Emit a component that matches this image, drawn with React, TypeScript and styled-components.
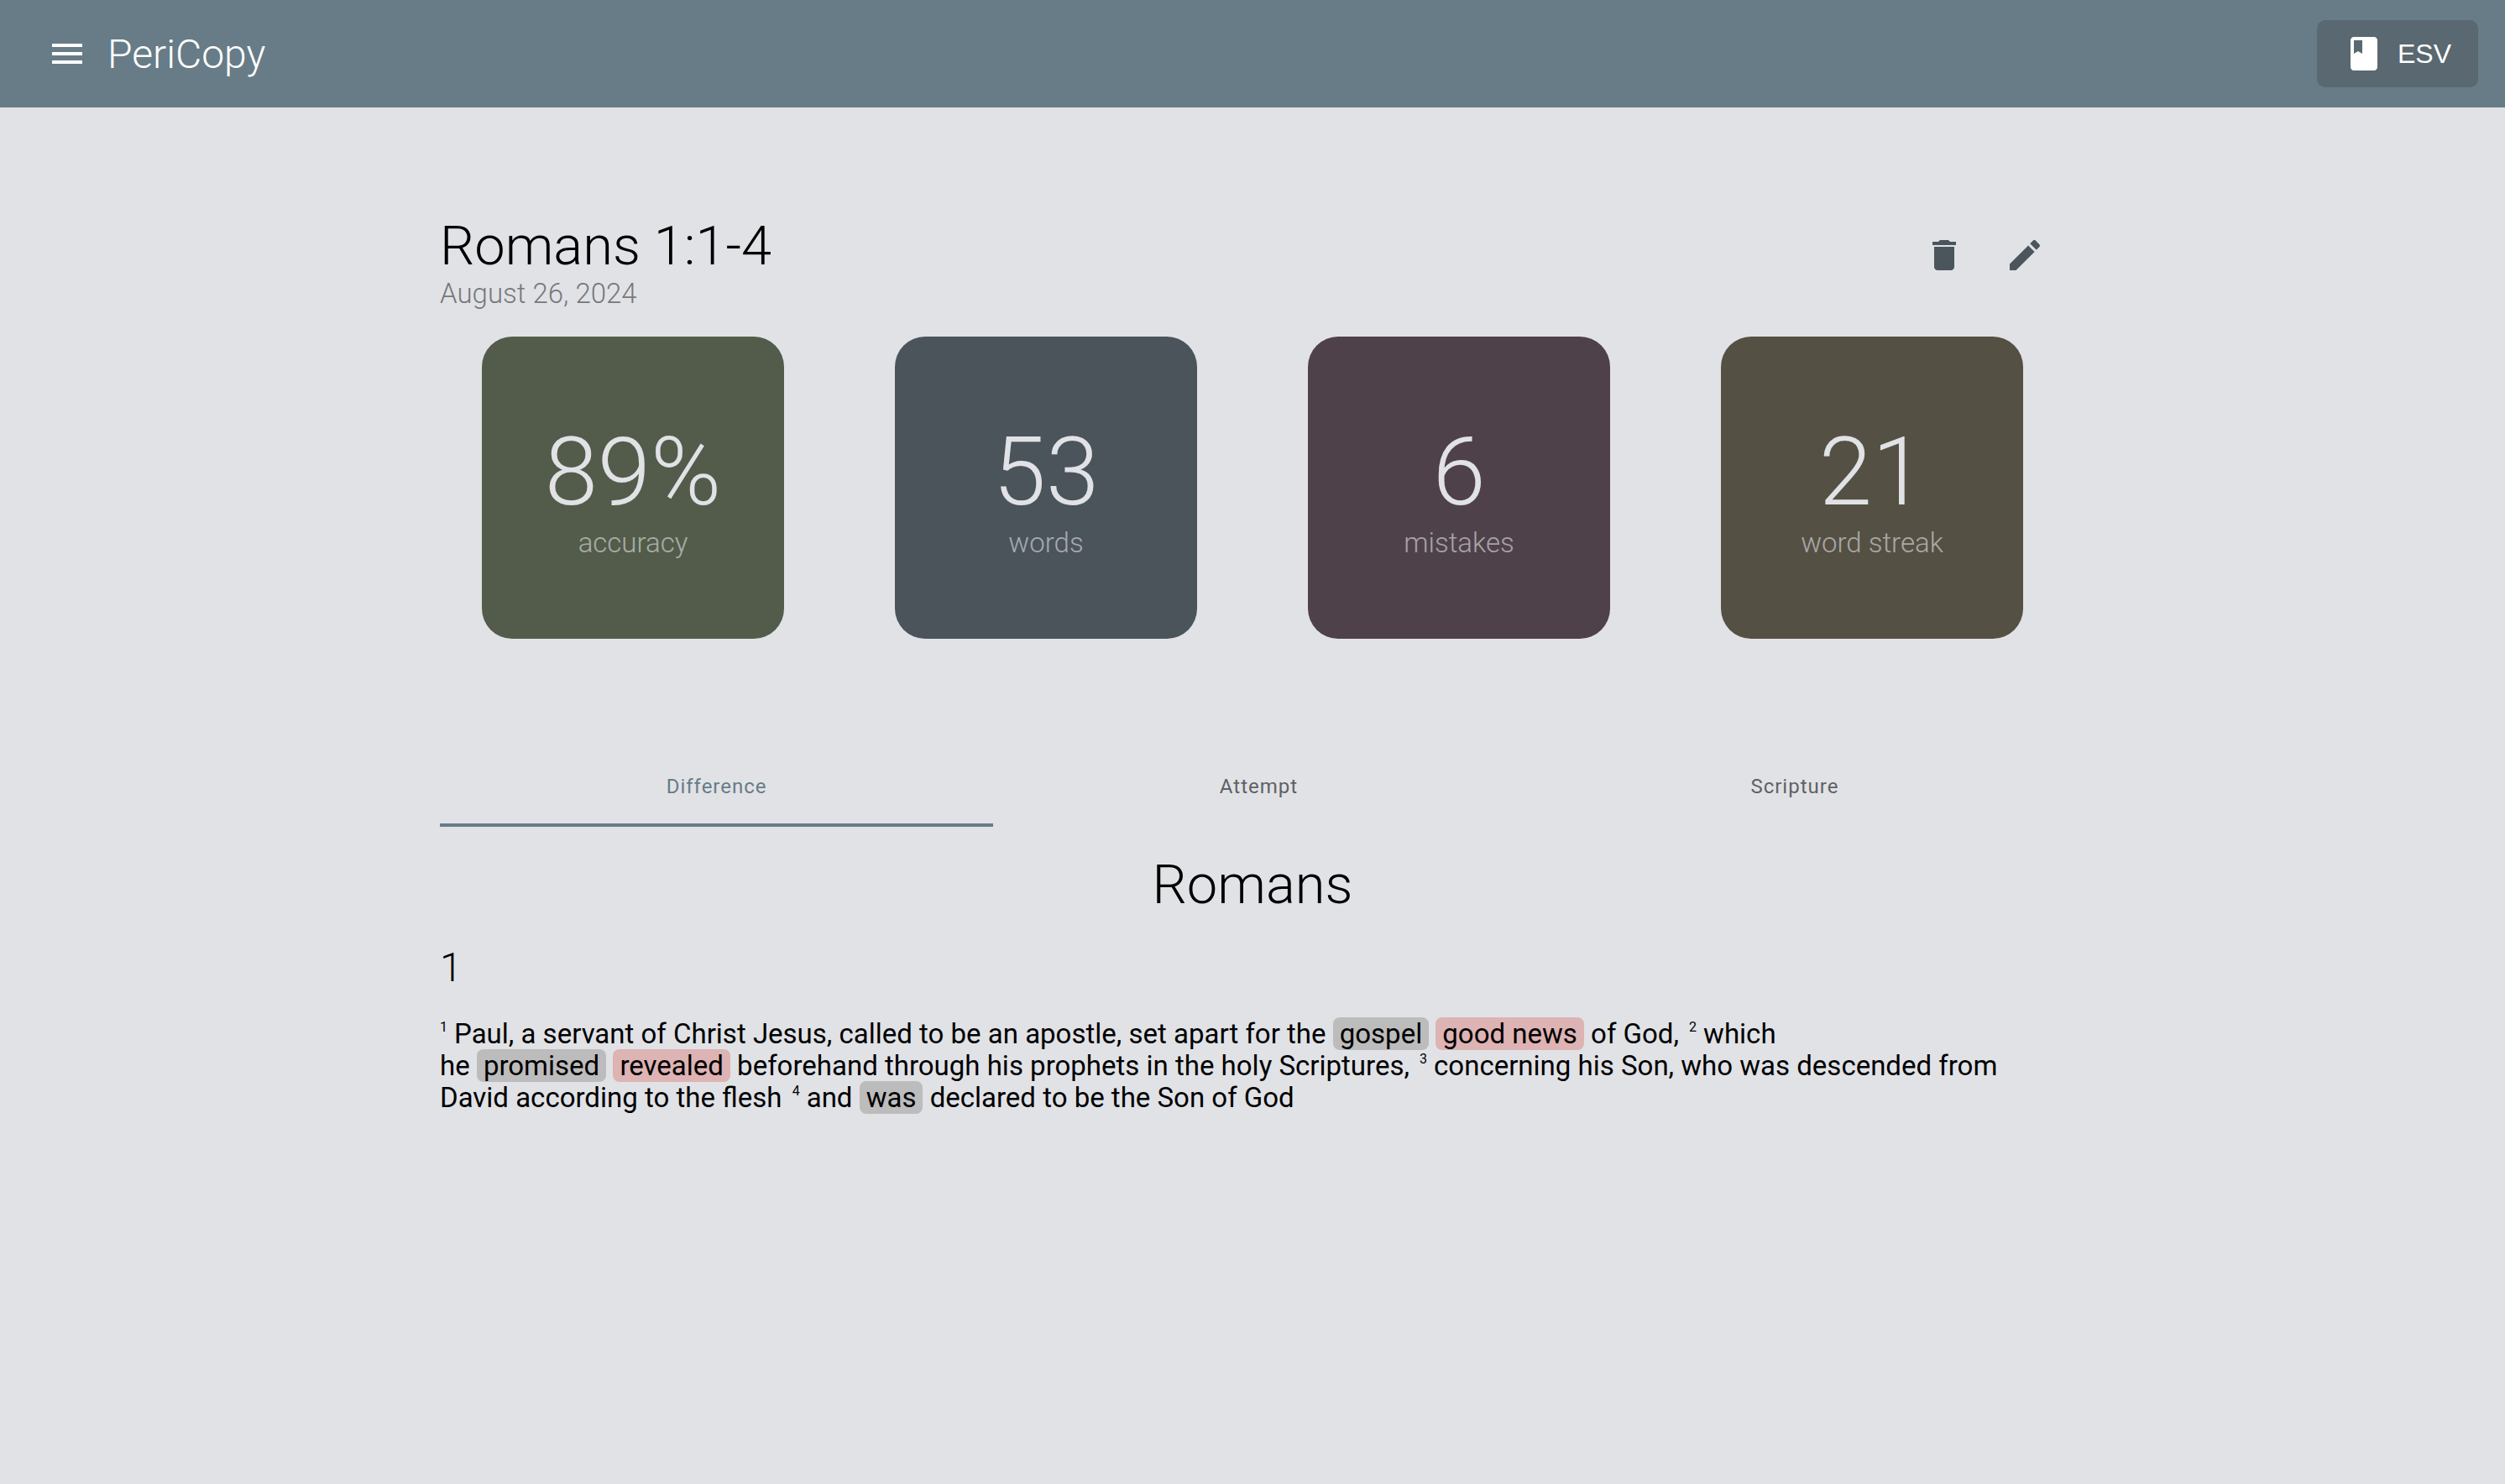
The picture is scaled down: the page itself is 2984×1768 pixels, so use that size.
import React, { useState } from "react";
import styled, { createGlobalStyle } from "styled-components";
import { MdBook, MdCreate, MdDelete, MdMenu } from "react-icons/md";

const colors = {
  page: "#e1e2e6",
  bar: "#677c87",
  chip: "#596871",
  icon: "#4b565c",
  muted: "#77787b",
  tab: "#606164",
  removed: "#bcbcbc",
  added: "#ddb3b3",
};

const GlobalStyle = createGlobalStyle`
  *, *::before, *::after { box-sizing: border-box; }
  body {
    margin: 0;
    min-height: 100vh;
    background: ${colors.page};
    color: #000;
    font-family: Roboto, sans-serif;
    font-size: 33px;
    line-height: 38px;
  }
  button {
    border: 0;
    background: none;
    color: inherit;
    font: inherit;
    cursor: pointer;
  }
  h1, h2, h3, p, dl, dd { margin: 0; }
`;

const AppBar = styled.header`
  display: flex;
  align-items: center;
  justify-content: space-between;
  height: 128px;
  padding: 0 32px;
  background: ${colors.bar};
  color: #fff;
`;

const Brand = styled.div`
  display: flex;
  align-items: center;
`;

const IconButton = styled.button`
  display: flex;
  padding: 24px;
  font-size: 48px;
`;

const BrandName = styled.span`
  font-size: 48px;
  font-weight: 300;
  line-height: 57px;
`;

const TranslationButton = styled.button`
  display: flex;
  align-items: center;
  gap: 16px;
  height: 80px;
  padding: 0 32px;
  border-radius: 10px;
  background: ${colors.chip};
  font-family: "Liberation Sans", Arial, sans-serif;
  font-size: 32px;
  svg { font-size: 48px; }
`;

const Content = styled.main`
  max-width: 2000px;
  margin: 0 auto;
  padding: 128px 32px;
`;

const TitleRow = styled.div`
  display: flex;
  align-items: flex-start;
  justify-content: space-between;
  margin-bottom: 32px;
`;

const Title = styled.h1`
  font-size: 65px;
  font-weight: 300;
  line-height: 75px;
`;

const DateLine = styled.p`
  color: ${colors.muted};
  font-weight: 300;
`;

const Actions = styled.div`
  display: flex;
  color: ${colors.icon};
`;

const Stats = styled.dl`
  display: grid;
  grid-template-columns: repeat(4, 1fr);
  justify-items: center;
  margin: 0 -16px 128px;
`;

const StatCard = styled.div<{ $tone: string }>`
  display: flex;
  flex-direction: column-reverse;
  align-items: center;
  justify-content: center;
  width: 360px;
  height: 360px;
  border-radius: 36px;
  background: ${(p) => p.$tone};
  color: ${colors.page};
`;

const StatValue = styled.dd`
  font-size: 114px;
  font-weight: 300;
  line-height: 131px;
`;

const StatLabel = styled.dt`
  font-weight: 300;
  opacity: 0.6;
`;

const Tabs = styled.div`
  display: flex;
  margin-bottom: 32px;
`;

const Tab = styled.button<{ $active: boolean }>`
  flex: 1 1 auto;
  height: 96px;
  padding: 4px 0 0;
  border-bottom: 4px solid ${(p) => (p.$active ? colors.bar : "transparent")};
  color: ${(p) => (p.$active ? colors.bar : colors.tab)};
  font-size: 24px;
  letter-spacing: 1px;
`;

const Passage = styled.article`
  display: flex;
  flex-direction: column;
  gap: 32px;
`;

const BookName = styled.h2`
  font-size: 65px;
  font-weight: 300;
  line-height: 75px;
  text-align: center;
`;

const Chapter = styled.h3`
  font-size: 48px;
  font-weight: 300;
  line-height: 57px;
`;

const Verses = styled.p`
  font-weight: 400;
`;

const VerseNumber = styled.sup`
  padding-right: 8px;
  font-size: 16px;
  line-height: 0;
  vertical-align: 14px;
`;

const Removed = styled.del`
  padding: 0 8px;
  border-radius: 8px;
  background: ${colors.removed};
  text-decoration: none;
`;

const Added = styled.ins`
  padding: 0 8px;
  border-radius: 8px;
  background: ${colors.added};
  text-decoration: none;
`;

const stats = [
  { value: "89%", label: "accuracy", tone: "#535c4a" },
  { value: "53", label: "words", tone: "#4b535b" },
  { value: "6", label: "mistakes", tone: "#4f4149" },
  { value: "21", label: "word streak", tone: "#545043" },
];

const tabs = ["Difference", "Attempt", "Scripture"];

export default function App() {
  const [active, setActive] = useState("Difference");

  return (
    <>
      <GlobalStyle />
      <AppBar>
        <Brand>
          <IconButton aria-label="Open menu">
            <MdMenu />
          </IconButton>
          <BrandName>PeriCopy</BrandName>
        </Brand>
        <TranslationButton>
          <MdBook />
          ESV
        </TranslationButton>
      </AppBar>
      <Content>
        <TitleRow>
          <div>
            <Title>Romans 1:1-4</Title>
            <DateLine>August 26, 2024</DateLine>
          </div>
          <Actions>
            <IconButton aria-label="Delete">
              <MdDelete />
            </IconButton>
            <IconButton aria-label="Edit">
              <MdCreate />
            </IconButton>
          </Actions>
        </TitleRow>
        <Stats>
          {stats.map((s) => (
            <StatCard key={s.label} $tone={s.tone}>
              <StatLabel>{s.label}</StatLabel>
              <StatValue>{s.value}</StatValue>
            </StatCard>
          ))}
        </Stats>
        <Tabs role="tablist">
          {tabs.map((name) => (
            <Tab
              key={name}
              role="tab"
              aria-selected={name === active}
              $active={name === active}
              onClick={() => setActive(name)}
            >
              {name}
            </Tab>
          ))}
        </Tabs>
        <Passage>
          <BookName>Romans</BookName>
          <Chapter>1</Chapter>
          <Verses>
            <VerseNumber>1</VerseNumber>
            Paul, a servant of Christ Jesus, called to be an apostle, set apart for the{" "}
            <Removed>gospel</Removed> <Added>good news</Added> of God,{" "}
            <VerseNumber>&nbsp;2</VerseNumber>
            which he{"\u00a0"}
            <Removed>promised</Removed>
            {"\u00a0"}
            <Added>revealed</Added> beforehand through his prophets in the holy Scriptures,{" "}
            <VerseNumber>&nbsp;3</VerseNumber>
            concerning his Son, who was descended from David according to the flesh{" "}
            <VerseNumber>&nbsp;4</VerseNumber>
            and <Removed>was</Removed> declared to be the Son of God
          </Verses>
        </Passage>
      </Content>
    </>
  );
}
